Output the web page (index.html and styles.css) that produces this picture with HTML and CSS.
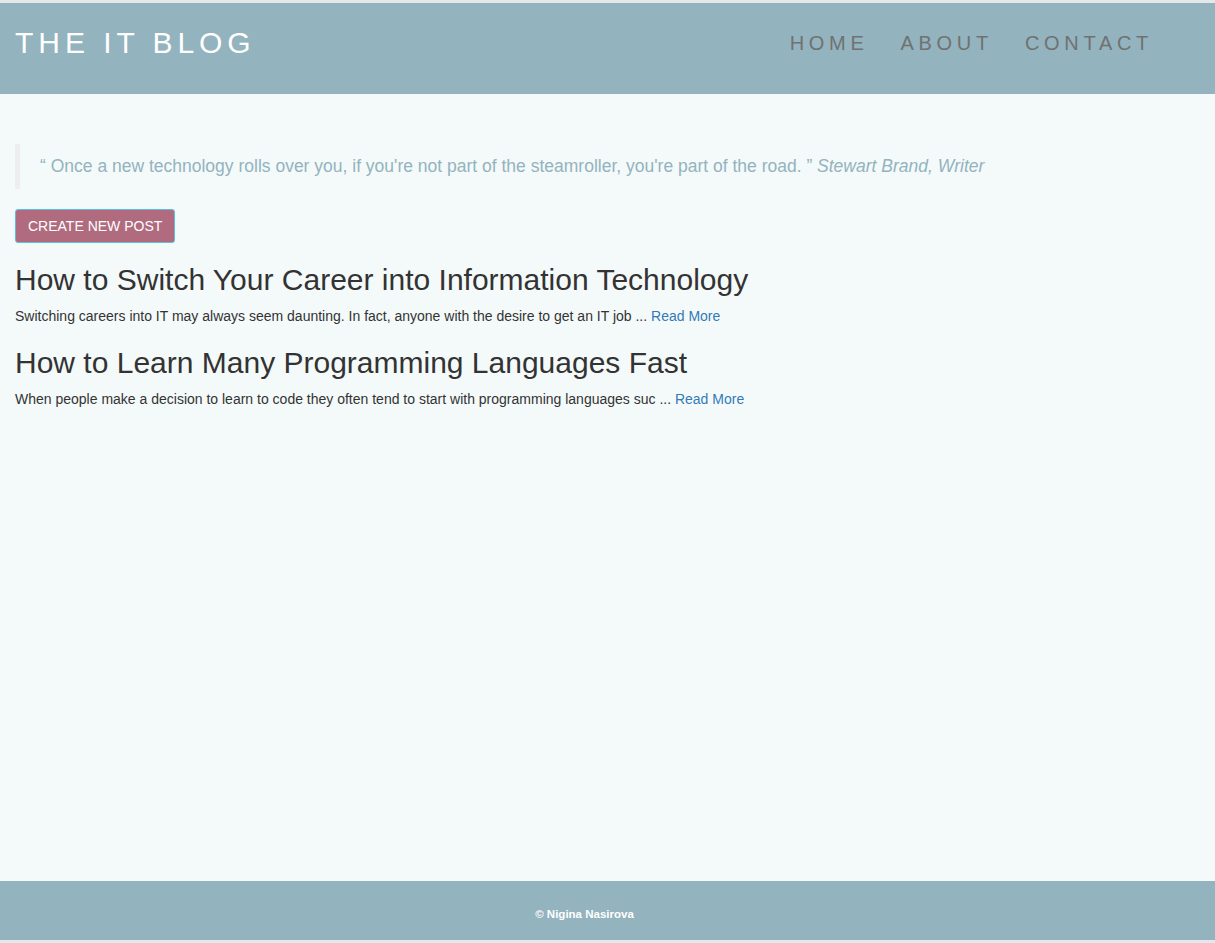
FILE: index.html
```html
<!DOCTYPE html>
<html>
<head>
<meta charset="utf-8">
<title>The IT Blog</title>
<link rel="stylesheet" href="styles.css">
</head>
<body>
<div class="page">
  <header class="topbar">
    <a class="brand" href="#">THE IT BLOG</a>
    <nav class="nav">
      <a href="#">HOME</a>
      <a href="#">ABOUT</a>
      <a href="#">CONTACT</a>
    </nav>
  </header>
  <main class="content">
    <blockquote class="quote">“ Once a new technology rolls over you, if you're not part of the steamroller, you're part of the road. ” <em>Stewart Brand, Writer</em></blockquote>
    <a class="btn" href="#">CREATE NEW POST</a>
    <article class="post">
      <h2>How to Switch Your Career into Information Technology</h2>
      <p>Switching careers into IT may always seem daunting. In fact, anyone with the desire to get an IT job ... <a href="#">Read More</a></p>
    </article>
    <article class="post">
      <h2>How to Learn Many Programming Languages Fast</h2>
      <p>When people make a decision to learn to code they often tend to start with programming languages suc ... <a href="#">Read More</a></p>
    </article>
  </main>
  <footer class="footer">© Nigina Nasirova</footer>
</div>
</body>
</html>
```
FILE: styles.css
```css
* { box-sizing: border-box; }
html, body { margin: 0; padding: 0; }
body {
  background: #e4e8ea;
  font-family: "Liberation Sans", Arial, Helvetica, sans-serif;
  font-size: 14px;
  line-height: 1.42857;
  color: #333;
}
.page {
  min-height: 943px;
  padding: 3px 0;
  display: flex;
  flex-direction: column;
}
.topbar {
  height: 91px;
  background: #93b3be;
  display: flex;
  align-items: center;
  justify-content: space-between;
  padding: 0 62px 0 15px;
}
.brand {
  color: #fff;
  text-decoration: none;
  font-size: 30px;
  letter-spacing: 4.95px;
  margin-top: -10px;
}
.nav {
  display: flex;
  gap: 32px;
  margin-top: -10px;
}
.nav a {
  color: #6f7271;
  text-decoration: none;
  font-size: 20px;
  letter-spacing: 4.7px;
}
.content {
  flex: 1;
  background: #f4fafa;
  padding: 50px 15px 20px;
}
.quote {
  margin: 0 0 20px;
  padding: 10px 20px;
  border-left: 5px solid #eeeeee;
  font-size: 17.5px;
  color: #93b3be;
}
.quote em { font-style: italic; }
.btn {
  display: inline-block;
  background: #b06b7e;
  color: #fff;
  text-decoration: none;
  font-size: 14px;
  line-height: 20px;
  padding: 6px 12px;
  border: 1px solid #5bc0de;
  border-radius: 3px;
}
.post h2 {
  margin: 20px 0 10px;
  font-size: 30px;
  font-weight: 400;
  line-height: 1.1;
  color: #333;
}
.post p { margin: 0 0 10px; font-size: 14px; line-height: 20px; }
.post p a { color: #337ab7; text-decoration: none; font-size: 14px; }
.footer {
  height: 59px;
  background: #93b3be;
  color: #fff;
  font-size: 11.5px;
  font-weight: 700;
  display: flex;
  align-items: center;
  justify-content: center;
  padding: 8px 46px 0 0;
}
```
